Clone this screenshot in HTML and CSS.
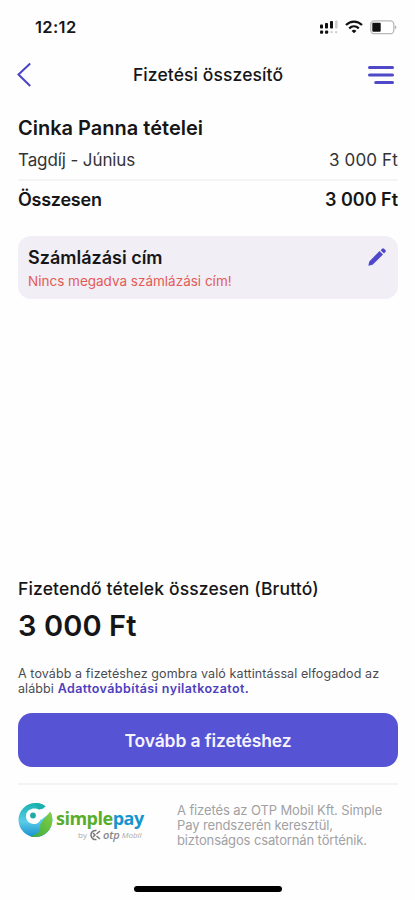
FILE: index.html
```html
<!DOCTYPE html>
<html lang="hu">
<head>
<meta charset="utf-8">
<title>Fizetési összesítő</title>
<link rel="stylesheet" href="styles.css">
</head>
<body>
<div class="screen">
  <div class="status">
    <span class="time">12:12</span>
    <div class="status-icons">
      <svg width="18" height="14" viewBox="0 0 18 14"><g fill="#111"><rect x="0" y="4.5" width="3" height="4" rx=".8"/><rect x="5" y="3" width="3" height="5.5" rx=".8"/><rect x="10" y="1" width="3" height="7.5" rx=".8"/><rect x="0" y="10.5" width="3.2" height="3.2" rx="1"/><rect x="5" y="10.5" width="3.2" height="3.2" rx="1"/></g><g fill="#ccc"><rect x="15" y="0.5" width="2.600" height="8" rx="1"/><rect x="10.500" y="11" width="2.200" height="2.200" rx="1"/><rect x="15" y="11" width="2.200" height="2.200" rx="1"/></g></svg>
      <svg width="18" height="14" viewBox="0 0 18 14"><g fill="none" stroke="#111" stroke-width="2.2"><path d="M1 5.1C5.5.5 12.500.5 17 5.100"/><path d="M4.200 8.400C7 5.700 11 5.700 13.800 8.400"/></g><path d="M9 13.300 6.600 11C7.800 9.400 10.200 9.400 11.400 11z" fill="#111"/></svg>
      <svg width="27" height="15" viewBox="0 0 27 15"><rect x=".8" y=".9" width="23" height="12.800" rx="3.500" fill="#fff" stroke="#b8b8b8" stroke-width="1.300"/><rect x="2.300" y="2.700" width="8.400" height="9" rx="1" fill="#111"/><path d="M25 5.200q2.400 2.100 0 4.200z" fill="#aaa"/></svg>
    </div>
  </div>
  <header class="nav">
    <svg width="15" height="26" viewBox="0 0 15 26"><path d="M13.200 1.500 1.500 12.500 13.200 24" fill="none" stroke="#4a42c4" stroke-width="2"/></svg>
    <h1 class="title">Fizetési összesítő</h1>
    <svg width="26" height="20" viewBox="0 0 26 20"><path d="M1.500 2.500H24.500M1.500 10H24.500M7.700 17.500H24.500" stroke="#4f49c8" stroke-width="3" stroke-linecap="round"/></svg>
  </header>
  <main class="content">
    <h2 class="person">Cinka Panna tételei</h2>
    <div class="row item"><span class="item-name">Tagdíj - Június</span><span class="item-price">3 000 Ft</span></div>
    <div class="row total"><span class="total-name">Összesen</span><span class="total-price">3 000 Ft</span></div>
    <section class="card">
      <div class="card-text">
        <h3 class="card-title">Számlázási cím</h3>
        <p class="card-error">Nincs megadva számlázási cím!</p>
      </div>
      <svg width="18" height="18" viewBox="0 0 18 18"><path d="M.3 17.700 1.300 13.500 11.500 3 15 6.500 4.600 16.800zM12.600 2.200 14.100.7Q15-.2 16 .7L17.400 2.100Q18.300 3 17.400 4L15.900 5.500z" fill="#5048cc"/></svg>
    </section>
  </main>
  <footer class="checkout">
    <p class="sum-label">Fizetendő tételek összesen (Bruttó)</p>
    <p class="sum">3 000 Ft</p>
    <p class="legal"><span class="legal-line">A tovább a fizetéshez gombra való kattintással elfogadod az</span><br>alábbi <a class="link">Adattovábbítási nyilatkozatot.</a></p>
    <button class="pay">Tovább a fizetéshez</button>
    <div class="provider">
      <div class="brand">
        <svg width="35" height="36" viewBox="0 0 35 36">
          <defs><linearGradient id="blue" x1="0" y1="0" x2="0" y2="1"><stop offset="0" stop-color="#16b3b0"/><stop offset=".55" stop-color="#5bcbe8"/><stop offset="1" stop-color="#168fce"/></linearGradient><linearGradient id="green" x1="1" y1="0" x2="0" y2="1"><stop offset="0" stop-color="#8ad03c"/><stop offset="1" stop-color="#36ab45"/></linearGradient></defs>
          <circle cx="17.500" cy="18" r="17" fill="url(#blue)"/>
          <path d="M22 7 27 5 30 2 35 9 32 11 23 18z" fill="#fefefe"/>
          <path d="M32 9.500A17 17 0 0 1 12 34.200C18 33 22 30 22 26 22 19 27 18 32 9.500z" fill="url(#green)"/>
          <path d="M8 13C9 7 16 5 21 7.500 25 8 27 6 29 7L31 11C28 12 25 13 23 17 21 21 19 22 16 22 11 22 7.500 18 8 13z" fill="#fefefe"/>
          <path d="M17 .9Q24 1 26.500 4 26 8 20 7z" fill="#19b0ad"/>
          <circle cx="15" cy="13.500" r="2.900" fill="#20a9a5"/>
        </svg>
        <div class="brand-text">
          <div class="wordmark">simple<span class="word-blue">pay</span></div>
          <div class="byline"><span>by</span><svg width="12" height="12" viewBox="0 0 12 12"><path d="M7.500 1.500A4.600 4.600 0 1 0 7.500 10.500" fill="none" stroke="#777" stroke-width="1.500"/><path d="M11 2 7.500 5M11 10 7.500 7M4 4 6 6 4 8" fill="none" stroke="#777" stroke-width="1.500"/></svg><span class="otp">otp</span><i>Mobil</i></div>
        </div>
      </div>
      <p class="provider-text">A fizetés az OTP Mobil Kft. Simple<br>Pay rendszerén keresztül,<br>biztonságos csatornán történik.</p>
    </div>
    <div class="home-bar"></div>
  </footer>
</div>
</body>
</html>
```

FILE: styles.css
```css
* { box-sizing: border-box; margin: 0; padding: 0; }
body { background: #fefefe; font-family: Inter, "Liberation Sans", sans-serif; color: #161618; }
svg { display: block; flex: none; }
.screen { width: 415px; height: 900px; display: flex; flex-direction: column; overflow: hidden; }
.status { height: 54px; padding: 0 18px 0 35px; display: flex; align-items: center; justify-content: space-between; }
.time { font-size: 16.500px; font-weight: 600; line-height: 20px; letter-spacing: .35px; }
.status-icons { display: flex; align-items: center; gap: 7px; }
.nav { height: 41px; padding: 0 21px 0 17px; display: flex; align-items: center; justify-content: space-between; }
.title { font-size: 17.500px; font-weight: 500; line-height: 22px; letter-spacing: .1px; margin-left: 16px; }
.content { flex: 1; padding: 21px 17px 0 18px; }
.person { font-size: 20px; font-weight: 600; line-height: 24px; }
.row { display: flex; justify-content: space-between; align-items: center; }
.item { height: 41px; padding-top: 1px; font-size: 17px; color: #333336; border-bottom: 2px solid #f4f4f5; }
.item-name { letter-spacing: -.1px; }
.item-price { letter-spacing: .15px; }
.total { height: 37px; font-size: 18px; font-weight: 600; }
.total-name { letter-spacing: -.25px; }
.card { margin-top: 18px; height: 63px; border-radius: 13px; background: #f1eef5; padding: 10px 12px 0 10px; display: flex; justify-content: space-between; align-items: flex-start; }
.card svg { margin-top: 2px; }
.card-title { font-size: 18px; font-weight: 600; line-height: 23px; }
.card-error { font-size: 13.500px; line-height: 24px; color: #e35b56; }
.checkout { padding: 0 17px 0 18px; height: 325px; display: flex; flex-direction: column; }
.sum-label { font-size: 17.500px; font-weight: 500; line-height: 22px; margin-top: 3px; letter-spacing: .14px; }
.sum { font-size: 29px; font-weight: 600; line-height: 34px; margin-top: 9px; letter-spacing: .1px; }
.legal { font-size: 12.500px; line-height: 15px; margin-top: 23px; color: #4c4c50; letter-spacing: .1px; }
.link { color: #4d3fbd; font-weight: 600; letter-spacing: .4px; }
.pay { flex: none; margin-top: 17px; height: 54px; border: 0; border-radius: 14px; background: #5653d4; color: #f6f4ff; font: 600 17.500px Inter, sans-serif; letter-spacing: -.12px; }
.provider { flex: none; height: 91px; margin-top: 16px; border-top: 2px solid #f4f4f5; display: flex; justify-content: space-between; }
.brand { display: flex; padding-top: 17px; gap: 3px; }
.brand-text { padding-top: 5px; }
.wordmark { font: 700 18px/22px "Open Sans", sans-serif; letter-spacing: -.5px; color: #58ad2c; }
.word-blue { color: #1795ce; }
.byline { display: flex; align-items: center; gap: 2px; height: 12px; padding-left: 22px; font: 8px/10px "Open Sans", sans-serif; color: #aaa; }
.otp { font-size: 11px; font-style: italic; font-weight: 600; color: #888; }
.provider-text { width: 221px; padding-top: 18px; font-size: 13px; line-height: 15px; letter-spacing: -.12px; color: #a1a1a4; white-space: nowrap; }
.home-bar { flex: none; align-self: center; width: 148px; height: 6px; border-radius: 3px; background: #000; margin-top: 12px; }
```
